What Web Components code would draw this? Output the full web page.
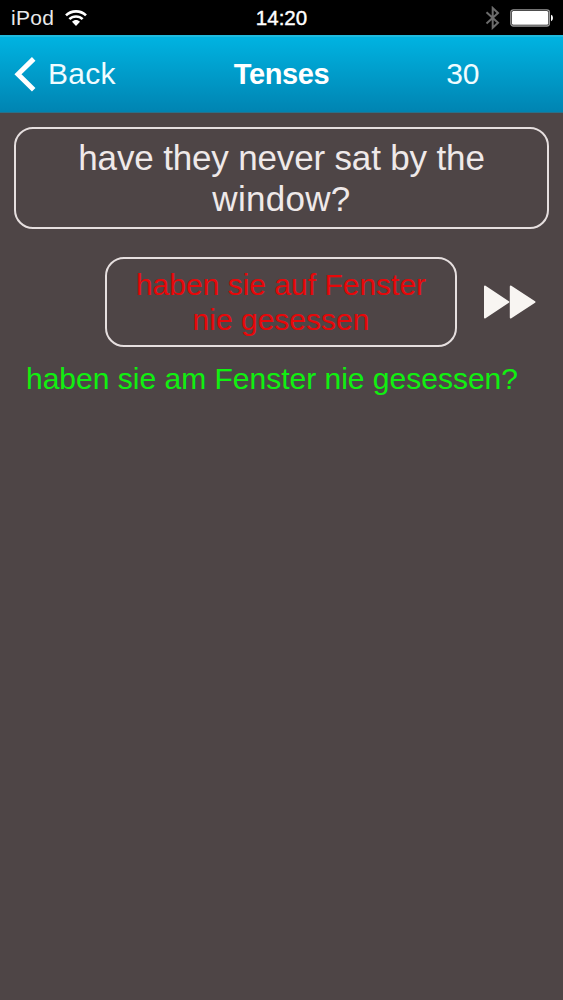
<!DOCTYPE html>
<html lang="en">
<head>
<meta charset="utf-8">
<title>Tenses</title>
<style>
  html, body {
    margin: 0;
    height: 100%;
    background: #4e4546;
    font-family: "Liberation Sans", Arial, sans-serif;
  }
</style>
</head>
<body>
<tense-quiz></tense-quiz>

<script>
class StatusBar extends HTMLElement {
  constructor() {
    super();
    const shadowRoot = this.attachShadow({ mode: 'open' });
    shadowRoot.innerHTML = `
    <style>
    :host {
      display: grid;
      grid-template-columns: 1fr auto 1fr;
      align-items: center;
      height: 35px;
      padding: 1px 10px 0;
      box-sizing: border-box;
      background: #000;
      color: #e9e9e9;
      font-size: 21px;
      line-height: 24px;
    }
    .left, .right {
      display: flex;
      align-items: center;
    }
    .left {
      gap: 11px;
      padding-left: 1px;
    }
    .right {
      justify-content: flex-end;
      gap: 10px;
    }
    .device {
      letter-spacing: 0.3px;
    }
    .time {
      color: #fff;
      font-size: 20.5px;
      -webkit-text-stroke: 0.4px #fff;
    }
    svg {
      display: block;
    }
    </style>
    <div class="left">
      <span class="device"><slot name="device"></slot></span>
      <svg width="22" height="16" viewBox="0 0 22 16">
        <g fill="none" stroke="#fff" stroke-width="2.6">
          <path d="M1 5.4 C6.5 0 15.5 0 21 5.4"/>
          <path d="M4.4 9.2 C8 5.6 14 5.6 17.6 9.2"/>
        </g>
        <path d="M7 11.8 C9.4 9.3 12.6 9.3 15 11.8 L11 16 Z" fill="#fff"/>
      </svg>
    </div>
    <span class="time"><slot name="time"></slot></span>
    <div class="right">
      <svg width="15" height="24" viewBox="0 0 15 24">
        <path d="M1.5 6.3 L13 16.8 L7.7 21.8 V2 L13 7 L1.5 17.5" fill="none" stroke="#6c6c6c" stroke-width="2"/>
      </svg>
      <svg width="43" height="18" viewBox="0 0 43 18">
        <rect x="0.8" y="0.8" width="38.6" height="16.2" rx="2.5" fill="none" stroke="#999" stroke-width="1.3"/>
        <rect x="1.9" y="2" width="36.4" height="13.8" rx="1.5" fill="#fff"/>
        <path d="M41 5.8 Q43 6.4 43 9 Q43 11.6 41 12.2 Z" fill="#fff"/>
      </svg>
    </div>
    `;
  }
}

class TitleBar extends HTMLElement {
  constructor() {
    super();
    const shadowRoot = this.attachShadow({ mode: 'open' });
    shadowRoot.innerHTML = `
    <style>
    :host {
      display: grid;
      grid-template-columns: 1fr auto 1fr;
      align-items: center;
      height: 78px;
      padding: 0 14px 2px;
      box-sizing: border-box;
      border-top: 2px solid #20bade;
      border-bottom: 1px solid #28718a;
      background: linear-gradient(#00b3e1, #0084b2);
      color: #f0fcff;
      font-size: 30px;
      line-height: 36px;
    }
    .back {
      display: flex;
      align-items: center;
      gap: 12px;
    }
    .back svg {
      display: block;
    }
    .label {
      letter-spacing: 0.3px;
    }
    .title {
      color: #fff;
      font-weight: bold;
      font-size: 29px;
      letter-spacing: -0.4px;
    }
    .count {
      padding-left: 117px;
    }
    </style>
    <div class="back">
      <svg width="22" height="36" viewBox="0 0 22 36">
        <path d="M19.7 2.9 L4 18.3 L19.7 33.7" fill="none" stroke="#fff" stroke-width="5"/>
      </svg>
      <span class="label"><slot name="back"></slot></span>
    </div>
    <span class="title"><slot></slot></span>
    <span class="count"><slot name="count"></slot></span>
    `;
  }
}

class TextCard extends HTMLElement {
  constructor() {
    super();
    const shadowRoot = this.attachShadow({ mode: 'open' });
    shadowRoot.innerHTML = `
    <style>
    :host {
      display: block;
      box-sizing: border-box;
      border: 2px solid #e6dfdf;
      border-radius: 19px;
      text-align: center;
      white-space: nowrap;
    }
    </style>
    <slot></slot>
    `;
  }
}

class SkipButton extends HTMLElement {
  constructor() {
    super();
    const shadowRoot = this.attachShadow({ mode: 'open' });
    shadowRoot.innerHTML = `
    <style>
    :host {
      display: block;
    }
    svg {
      display: block;
    }
    </style>
    <svg width="53" height="34" viewBox="0 0 53 34">
      <g fill="#f8f5f2" stroke="#f8f5f2" stroke-width="2" stroke-linejoin="round">
        <path d="M2 1.5 L25.3 17 L2 32.5 Z"/>
        <path d="M27.8 1.5 L51.5 17 L27.8 32.5 Z"/>
      </g>
    </svg>
    `;
  }
}

class TenseQuiz extends HTMLElement {
  constructor() {
    super();
    const shadowRoot = this.attachShadow({ mode: 'open' });
    shadowRoot.innerHTML = `
    <style>
    :host {
      display: flex;
      flex-direction: column;
      height: 100vh;
      overflow: hidden;
    }
    main {
      display: flex;
      flex-direction: column;
      padding: 14px 14px 0;
    }
    .question {
      height: 102px;
      padding-top: 8px;
      color: #efe9e9;
      font-size: 35px;
      line-height: 41px;
    }
    .question span:first-child {
      letter-spacing: -0.16px;
    }
    .question span:last-child {
      letter-spacing: 0.3px;
    }
    .row {
      display: flex;
      align-items: center;
      gap: 26px;
      margin: 28px 0 0 91px;
    }
    .answer {
      width: 352px;
      height: 90px;
      padding-top: 8px;
      color: #e6080a;
      font-size: 30px;
      line-height: 35px;
    }
    .solution {
      margin: 14px 0 0 12px;
      color: #10f010;
      font-size: 30px;
      line-height: 35px;
      white-space: nowrap;
    }
    </style>
    <status-bar>
      <span slot="device">iPod</span>
      <span slot="time">14:20</span>
    </status-bar>
    <title-bar>
      <span slot="back">Back</span>
      Tenses
      <span slot="count">30</span>
    </title-bar>
    <main>
      <text-card class="question"><span>have they never sat by the</span><br><span>window?</span></text-card>
      <div class="row">
        <text-card class="answer"><span>haben sie auf Fenster</span><br><span>nie gesessen</span></text-card>
        <skip-button></skip-button>
      </div>
      <div class="solution">haben sie am Fenster nie gesessen?</div>
    </main>
    `;
  }
}

customElements.define('status-bar', StatusBar);
customElements.define('title-bar', TitleBar);
customElements.define('text-card', TextCard);
customElements.define('skip-button', SkipButton);
customElements.define('tense-quiz', TenseQuiz);
</script>
</body>
</html>
